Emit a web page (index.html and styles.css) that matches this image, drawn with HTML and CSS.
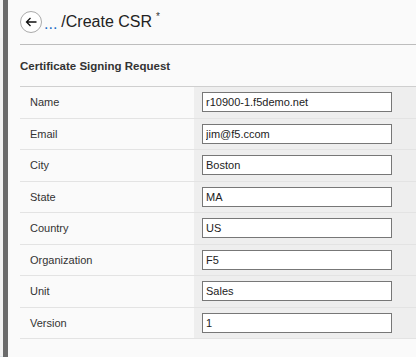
FILE: index.html
```html
<!DOCTYPE html>
<html lang="en">
<head>
<meta charset="UTF-8" />
<title>Create CSR</title>
<link rel="stylesheet" href="styles.css">
</head>
<body>
<div class="edge"></div>
<div class="rail"></div>
<div class="page">
  <header class="crumbs">
    <span class="back">
      <svg width="12" height="12" viewBox="0 0 12 12"><path d="M11.5 6H1.5M5.5 2L1.5 6l4 4" fill="none" stroke="#111" stroke-width="1.3"/></svg>
    </span>
    <a class="more">...</a>
    <h1>/Create CSR</h1>
    <sup>*</sup>
  </header>
  <h2 class="title">Certificate Signing Request</h2>
  <div class="form">
    <div class="row"><label>Name</label><div class="val"><input value="r10900-1.f5demo.net"></div></div>
    <div class="row"><label>Email</label><div class="val"><input value="jim@f5.ccom"></div></div>
    <div class="row"><label>City</label><div class="val"><input value="Boston"></div></div>
    <div class="row"><label>State</label><div class="val"><input value="MA"></div></div>
    <div class="row"><label>Country</label><div class="val"><input value="US"></div></div>
    <div class="row"><label>Organization</label><div class="val"><input value="F5"></div></div>
    <div class="row"><label>Unit</label><div class="val"><input value="Sales"></div></div>
    <div class="row"><label>Version</label><div class="val"><input value="1"></div></div>
  </div>
</div>
</body>
</html>
```

FILE: styles.css
```css
body {
  margin: 0;
  display: flex;
  height: 357px;
  overflow: hidden;
  font-family: "Liberation Sans", Arial, sans-serif;
  color: #333;
  background: #f8f8f8;
}

.edge {
  width: 3px;
  background: #f2f2f2;
  border-top: 38px solid #f4f4f4;
  box-shadow: inset 0 -1px 0 #dde4ea;
}

.rail {
  width: 5px;
  background: #6b6b6b;
}

.page {
  flex: 1;
  background: #fafafa;
  padding-left: 12px;
}

.crumbs {
  display: flex;
  align-items: center;
  height: 44px;
  border-bottom: 1px solid #bdbdbd;
}

.back {
  width: 20px;
  height: 20px;
  border: 1px solid #aaa;
  border-radius: 50%;
  display: flex;
  align-items: center;
  justify-content: center;
  background: #fff;
}

.more {
  color: #1f6fc6;
  font-size: 16px;
  margin: 4px 4px 0 2px;
}

.crumbs h1 {
  margin: 0;
  font-size: 16px;
  font-weight: normal;
  color: #222;
}

.crumbs sup {
  font-size: 10px;
  margin: -12px 0 0 4px;
  color: #333;
}

.title {
  margin: 0;
  height: 41px;
  line-height: 42px;
  font-size: 11.5px;
  font-weight: bold;
  border-bottom: 1px solid #cfcfcf;
}

.row {
  display: grid;
  grid-template-columns: 174px 1fr;
  height: 31.5px;
  box-sizing: border-box;
  border-bottom: 1px solid #e3e3e3;
}

.row label {
  font-size: 11px;
  padding-left: 10px;
  display: flex;
  align-items: center;
  color: #333;
}

.val {
  background: #eeeeee;
  display: flex;
  align-items: center;
  padding-left: 8px;
}

.val input {
  width: 190px;
  height: 20px;
  box-sizing: border-box;
  border: 1px solid #777;
  padding: 0 3px;
  font-family: "Liberation Sans", Arial, sans-serif;
  font-size: 11px;
  color: #222;
  background: #fff;
  outline: none;
}
```
